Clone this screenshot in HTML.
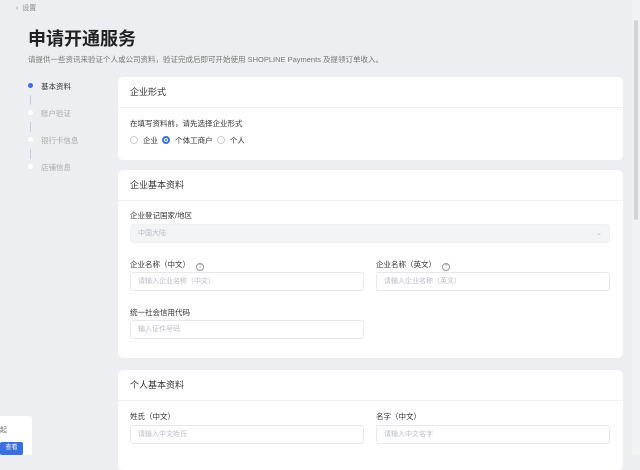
<!DOCTYPE html>
<html><head><meta charset="utf-8"><style>
*{margin:0;padding:0;box-sizing:border-box}
body{width:640px;height:455px;overflow:hidden;background:#eceef2;font-family:"Liberation Sans","Noto Sans CJK SC",sans-serif;color:#333;position:relative}
.a{position:absolute}
.card{position:absolute;left:118px;width:505px;background:#fff;border-radius:5px}
.hd{height:31px;border-bottom:1px solid #eef0f3;font-size:9px;line-height:31px;padding-left:12px;color:#333}
.lbl{position:absolute;font-size:7.5px;color:#333}
.inp{position:absolute;height:19px;border:1px solid #e6e8ec;border-radius:3px;font-size:7px;color:#b8bcc4;line-height:17px;padding-left:7px;background:#fff}
.q{display:inline-block;width:8px;height:8px;border:1px solid #999;border-radius:50%;font-size:5.5px;line-height:6px;text-align:center;margin-left:6px;color:#999;vertical-align:-1px}
.rad{display:inline-block;width:8px;height:8px;border:1px solid #ccc;border-radius:50%;vertical-align:-1px;margin-right:5px}
.step{position:absolute;left:41px;font-size:7.5px;color:#aaa}
.dot{position:absolute;left:28px;width:5px;height:5px;border-radius:50%;background:#fff}
.ln{position:absolute;left:30px;width:1px;height:10px;background:#ccd}
</style></head><body>
<div class="a" style="left:16px;top:3px;font-size:7px;color:#888">‹ &nbsp;设置</div>
<div class="a" style="left:28px;top:25px;font-size:18px;font-weight:bold;color:#222">申请开通服务</div>
<div class="a" style="left:28px;top:54px;font-size:7.5px;color:#777">请提供一些资讯来验证个人或公司资料，验证完成后即可开始使用 SHOPLINE Payments 及提领订单收入。</div>
<div class="dot" style="top:83px;background:#3a6fe0"></div>
<div class="step" style="top:81px;color:#333">基本资料</div>
<div class="ln" style="top:95px"></div>
<div class="dot" style="top:110px"></div>
<div class="step" style="top:108px">账户验证</div>
<div class="ln" style="top:122px"></div>
<div class="dot" style="top:137px"></div>
<div class="step" style="top:135px">银行卡信息</div>
<div class="ln" style="top:149px"></div>
<div class="dot" style="top:164px"></div>
<div class="step" style="top:162px">店铺信息</div>

<div class="card" style="top:77px;height:83px">
<div class="hd">企业形式</div>
<div class="lbl" style="left:12px;top:41px">在填写资料前，请先选择企业形式</div>
<div class="lbl" style="left:12px;top:58px;color:#333"><span class="rad"></span>企业 &nbsp;<span class="rad" style="border:2.5px solid #3a6fe0;box-shadow:inset 0 0 0 1px #fff;background:#3a6fe0"></span>个体工商户 &nbsp;<span class="rad"></span>个人</div>
</div>

<div class="card" style="top:170px;height:188px">
<div class="hd">企业基本资料</div>
<div class="lbl" style="left:12px;top:40px">企业登记国家/地区</div>
<div class="inp" style="left:12px;top:54px;width:480px;background:#f3f4f6;border-color:#f0f1f3">中国大陆<span style="position:absolute;right:7px;color:#bbb">⌄</span></div>
<div class="lbl" style="left:12px;top:89px">企业名称（中文）<span class="q">?</span></div>
<div class="lbl" style="left:258px;top:89px">企业名称（英文）<span class="q">?</span></div>
<div class="inp" style="left:12px;top:102px;width:234px">请输入企业名称（中文）</div>
<div class="inp" style="left:258px;top:102px;width:234px">请输入企业名称（英文）</div>
<div class="lbl" style="left:12px;top:137px">统一社会信用代码</div>
<div class="inp" style="left:12px;top:150px;width:234px">输入证件号码</div>
</div>

<div class="card" style="top:370px;height:100px">
<div class="hd">个人基本资料</div>
<div class="lbl" style="left:12px;top:41px">姓氏（中文）</div>
<div class="lbl" style="left:258px;top:41px">名字（中文）</div>
<div class="inp" style="left:12px;top:55px;width:234px">请输入中文姓氏</div>
<div class="inp" style="left:258px;top:55px;width:234px">请输入中文名字</div>
</div>

<div class="a" style="left:0;top:416px;width:32px;height:39px;background:#fff;border-radius:0 3px 0 0"></div>
<div class="a" style="left:0;top:425px;font-size:7px;color:#666">起</div>
<div class="a" style="left:0;top:442px;width:23px;height:13px;background:#3a6fe0;border-radius:2px;font-size:6px;color:#fff;text-align:center;line-height:13px">查看</div>
<div class="a" style="left:632px;top:0;width:8px;height:455px;background:#f1f2f4"></div>
<div class="a" style="left:634px;top:20px;width:4px;height:200px;background:#d4d4d6;border-radius:2px"></div>
</body></html>
